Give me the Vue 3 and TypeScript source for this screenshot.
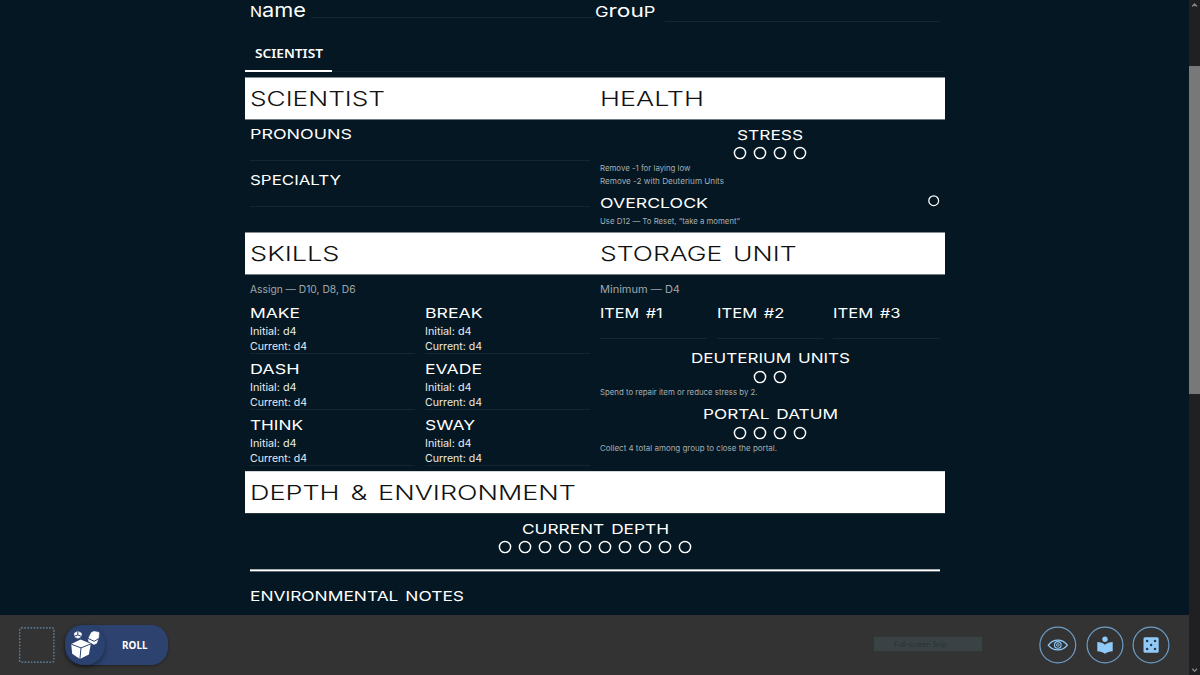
<script setup lang="ts">
import { h } from 'vue'

interface FitProps {
  t: string
  w: number
  h: number
  b: number
  kind: string
}

// A line of text set to an exact width on a given baseline.
const Fit = (p: FitProps) =>
  h('svg', { class: ['fit', p.kind], width: p.w, height: p.h }, [
    h('text', { x: 0, y: p.b, textLength: p.w, lengthAdjust: 'spacingAndGlyphs' }, p.t),
  ])
Fit.props = ['t', 'w', 'h', 'b', 'kind']

// A row of empty tracker circles on a 20px pitch.
const Dots = (p: { n: number }) =>
  h(
    'svg',
    { class: 'pips', width: p.n * 20, height: 14 },
    Array.from({ length: p.n }, (_, i) => h('circle', { cx: i * 20 + 10, cy: 7, r: 5.6 })),
  )
Dots.props = ['n']

const skills = [
  { name: 'MAKE', w: 50 },
  { name: 'BREAK', w: 57.5 },
  { name: 'DASH', w: 49.5 },
  { name: 'EVADE', w: 57 },
  { name: 'THINK', w: 53 },
  { name: 'SWAY', w: 50 },
]
const items = [
  { name: 'ITEM #1', w: 62.5 },
  { name: 'ITEM #2', w: 67.5 },
  { name: 'ITEM #3', w: 67.5 },
]
</script>

<template>
  <div class="app">
    <main class="sheet">
      <header class="ident">
        <div class="who">
          <svg class="fit uni" width="56" height="24"><text x="0" y="16.9" textLength="56" lengthAdjust="spacingAndGlyphs">N<tspan class="lc">ame</tspan></text></svg>
          <i class="rule name-rule"></i>
        </div>
        <div class="who">
          <svg class="fit uni" width="61" height="24"><text x="0" y="16.9" textLength="60.5" lengthAdjust="spacingAndGlyphs">G<tspan class="mc">rou</tspan>P</text></svg>
          <i class="rule group-rule"></i>
        </div>
      </header>
      <nav class="tabs">
        <div class="tab"><Fit t="SCIENTIST" :w="68" :h="38" :b="26.3" kind="tabtext" /></div>
      </nav>

      <div class="bar">
        <Fit t="SCIENTIST" :w="135" :h="41" :b="27.7" kind="big" />
        <Fit t="HEALTH" :w="104" :h="41" :b="27.7" kind="big" />
      </div>
      <section class="cols first">
        <div class="col">
          <div class="field"><Fit t="PRONOUNS" :w="102" :h="40" :b="19.4" kind="head" /></div>
          <div class="field"><Fit t="SPECIALTY" :w="91" :h="45" :b="24.2" kind="head" /></div>
        </div>
        <div class="col">
          <Fit class="mid" t="STRESS" :w="66" :h="26" :b="20" kind="head" />
          <div class="dots"><Dots :n="4" /></div>
          <Fit t="Remove -1 for laying low" :w="90.5" :h="13" :b="11.4" kind="note" />
          <Fit t="Remove -2 with Deuterium Units" :w="124" :h="13" :b="11" kind="note" />
          <div class="clock">
            <Fit t="OVERCLOCK" :w="108" :h="26" :b="21.5" kind="head" />
            <svg class="pips thin" width="12" height="26"><circle cx="5.7" cy="14.7" r="4.9" /></svg>
          </div>
          <Fit t="Use D12 — To Reset, “take a moment”" :w="140" :h="20" :b="11.8" kind="note" />
        </div>
      </section>

      <div class="bar">
        <Fit t="SKILLS" :w="89.5" :h="41" :b="27.9" kind="big" />
        <Fit t="STORAGE UNIT" :w="196.5" :h="41" :b="27.9" kind="big" />
      </div>
      <section class="cols second">
        <div class="col">
          <Fit t="Assign — D10, D8, D6" :w="105.5" :h="23" :b="18.2" kind="body dim" />
          <div class="skills">
            <div v-for="s in skills" :key="s.name" class="skill">
              <Fit :t="s.name" :w="s.w" :h="27" :b="19.8" kind="head" />
              <Fit t="Initial: d4" :w="46.5" :h="15" :b="10" kind="body" />
              <Fit t="Current: d4" :w="57" :h="13" :b="9.8" kind="body" />
            </div>
          </div>
        </div>
        <div class="col">
          <Fit t="Minimum — D4" :w="80" :h="23" :b="18.2" kind="body dim" />
          <div class="items">
            <div v-for="i in items" :key="i.name" class="item">
              <Fit :t="i.name" :w="i.w" :h="40" :b="19.8" kind="head" />
            </div>
          </div>
          <Fit class="mid" t="DEUTERIUM UNITS" :w="159" :h="30" :b="24.4" kind="head" />
          <div class="dots tall"><Dots :n="2" /></div>
          <Fit t="Spend to repair item or reduce stress by 2." :w="157.5" :h="14" :b="10.3" kind="note" />
          <Fit class="mid" t="PORTAL DATUM" :w="135" :h="26" :b="19.8" kind="head" />
          <div class="dots"><Dots :n="4" /></div>
          <Fit t="Collect 4 total among group to close the portal." :w="177" :h="14" :b="11.3" kind="note" />
        </div>
      </section>

      <div class="bar last">
        <Fit t="DEPTH &amp; ENVIRONMENT" :w="326" :h="41" :b="27.6" kind="big" />
      </div>
      <section class="depth">
        <Fit class="mid" t="CURRENT DEPTH" :w="147" :h="26" :b="19.8" kind="head" />
        <div class="dots"><Dots :n="10" /></div>
        <div class="divider"></div>
        <Fit t="ENVIRONMENTAL NOTES" :w="214" :h="40" :b="29.3" kind="head" />
      </section>
    </main>

    <footer class="dock">
      <svg class="slot" width="36" height="36" viewBox="0 0 36 36">
        <rect x=".7" y=".8" width="34.2" height="34.4" rx="1.5" />
      </svg>
      <button class="roll">
        <span class="dice">
          <svg width="40" height="40" viewBox="0 0 40 40">
            <g fill="#fff" stroke="#fff" stroke-width=".6" stroke-linejoin="round">
              <path d="M26.4 7.6 29 6.4 34 7.4 33.6 12.8 31.6 18.2 29 19.4 23.8 16.6 23.2 14Z" />
              <path d="M9.4 8.2 12.8 6.3 16.4 8.2 16.2 11.6 13 13.3 9.6 11.8Z" />
            </g>
            <path d="M6.2 19 15.6 14.6 25.8 18.8 23.9 29.6 14.9 34 7.2 28.8Z" fill="#fff" stroke="#2b4271" stroke-width="1" paint-order="stroke" stroke-linejoin="round" />
            <g fill="none" stroke="#2b4271" stroke-width="1">
              <path d="M6.2 19.2 16 22.9 26 18.8M16 22.9 14.9 34.2M22.4 13.1 29.2 16.3 34.2 13.4M12.8 6 12.8 9.9 9 11.4M12.8 9.9 16.9 11.6" />
            </g>
          </svg>
        </span>
        <Fit t="ROLL" :w="25.5" :h="40" :b="23.8" kind="rolltext" />
      </button>
      <div class="snip"><Fit t="Full-screen Snip" :w="53" :h="14" :b="9.7" kind="sniptext" /></div>
      <div class="tools">
        <span class="tool">
          <svg width="38" height="38" viewBox="0 0 38 38">
            <circle class="ring" cx="18.8" cy="19" r="17.9" />
            <g fill="none" stroke="#90caf9">
              <path stroke-width="1.3" d="M9.3 19.1C14.2 12.5 23.4 12.5 28.3 19.1 23.4 25.5 14.2 25.5 9.3 19.1Z" />
              <circle cx="18.8" cy="18.9" r="3.3" stroke-width="1.1" />
              <circle cx="18.8" cy="18.9" r="1.3" stroke-width="1" />
            </g>
          </svg>
        </span>
        <span class="tool">
          <svg width="38" height="38" viewBox="0 0 38 38">
            <circle class="ring" cx="19" cy="19" r="17.9" />
            <g fill="#90caf9">
              <circle cx="19" cy="13.3" r="2.7" />
              <path d="M11.3 16.1C14.2 16.1 17 17.1 19 18.8 21 17.1 23.8 16.1 26.7 16.1V25.3C23.8 25.4 21 26.2 19 27.8 17 26.2 14.2 25.4 11.3 25.3Z" />
            </g>
          </svg>
        </span>
        <span class="tool">
          <svg width="38" height="38" viewBox="0 0 38 38">
            <circle class="ring" cx="19" cy="19" r="17.9" />
            <rect x="11.5" y="11.2" width="15.2" height="15.6" rx="1.6" fill="#90caf9" />
            <g fill="#2c3a47">
              <circle cx="15.1" cy="15.1" r="1.25" /><circle cx="23" cy="15.1" r="1.25" />
              <circle cx="19.1" cy="19" r="1.25" />
              <circle cx="15.1" cy="22.9" r="1.25" /><circle cx="23" cy="22.9" r="1.25" />
            </g>
          </svg>
        </span>
      </div>
    </footer>

    <aside class="scroll">
      <svg width="11" height="10" viewBox="0 0 11 10"><path d="M3.2 6.5 5.6 4.1 8 6.5" /></svg>
      <div class="thumb"></div>
      <svg width="11" height="10" viewBox="0 0 11 10"><path d="M3.2 3.8 5.6 6.2 8 3.8" /></svg>
    </aside>
  </div>
</template>

<style>
body {
  margin: 0;
  background: #041722;
  overflow: hidden;
}
.fit {
  display: block;
  flex: none;
  overflow: visible;
  fill: #fff;
  font-family: Inter, "Liberation Sans", sans-serif;
}
.fit.mid { margin: 0 auto; }
.fit.big { font-size: 20.6px; font-weight: 300; fill: #111; word-spacing: 2.5px; }
.fit.head { font-size: 13.6px; font-weight: 400; word-spacing: 1.6px; }
.fit.body { font-size: 10.5px; fill: #e9ecee; }
.fit.body.dim { fill: #a0a8ad; }
.fit.note { font-size: 7.9px; fill: #a6aeb3; }
.fit.tabtext { font-family: "Noto Sans", sans-serif; font-size: 12.3px; font-weight: 600; }
.fit.rolltext { font-family: "Noto Sans", sans-serif; font-size: 10.6px; font-weight: 700; }
.fit.sniptext { font-family: Lato, sans-serif; font-size: 7.8px; fill: #293136; }
.fit.uni { font-size: 14px; }
.fit.uni .lc { font-size: 19px; }
.fit.uni .mc { font-size: 17.5px; }
.pips { display: block; fill: none; stroke: #fff; stroke-width: 1.45; }
.pips.thin { stroke-width: 1.25; }
</style>

<style scoped>
.app {
  width: 1200px;
  height: 675px;
  display: grid;
  grid-template-columns: 1189px 11px;
  grid-template-rows: 615px 60px;
  overflow: hidden;
  background: #041722;
}
.sheet {
  width: 700px;
  margin-left: 245px;
}
.ident {
  display: grid;
  grid-template-columns: 345px 345px;
  height: 32px;
  padding-left: 5px;
}
.who { display: flex; align-items: flex-start; }
.rule { height: 1px; background: #14262f; }
.name-rule { width: 284px; margin: 17px 0 0 5px; }
.group-rule { width: 275px; margin: 21px 0 0 9px; }
.tabs {
  height: 40px;
  margin-bottom: 5px;
  box-shadow: inset 0 -1px #10242e;
}
.tab {
  width: 87.4px;
  height: 38px;
  border-bottom: 2px solid #fff;
}
.tab .fit { margin-left: 10px; }
.bar {
  height: 43px;
  box-sizing: border-box;
  background: #fff;
  border-top: 1px solid #858d92;
  border-bottom: 1px solid #737c82;
  display: grid;
  grid-template-columns: 350px 340px;
  padding-left: 5px;
}
.bar.last { border-top-color: #d4d6da; border-bottom-color: #25363f; }
.cols {
  display: grid;
  grid-template-columns: 340px 340px;
  column-gap: 10px;
  padding: 0 5px;
}
.first { height: 112px; }
.second { height: 196px; }
.field { border-bottom: 1px solid #14262f; }
.dots {
  display: flex;
  justify-content: center;
  align-items: center;
  height: 14px;
}
.second .dots { height: 15px; }
.second .dots.tall { height: 16px; }
.clock { display: flex; justify-content: space-between; height: 26px; }
.skills { display: grid; grid-template-columns: 1fr 1fr; column-gap: 10px; }
.skill { height: 55px; border-bottom: 1px solid #14262f; }
.items { display: grid; grid-template-columns: repeat(3, 1fr); column-gap: 10px; }
.item { border-bottom: 1px solid #14262f; }
.depth { padding: 0 5px; }
.divider {
  height: 1px;
  margin-top: 15px;
  background: #fff;
  border-top: 1px solid #a9b0b4;
  border-bottom: 1px solid #5c686f;
}
.dock {
  background: #333;
  display: flex;
  align-items: flex-start;
  padding-left: 19.4px;
}
.slot { margin-top: 12px; flex: none; }
.slot rect { fill: none; stroke: #6291b3; stroke-width: 1.2; stroke-dasharray: 1.6 1.5; }
.roll {
  width: 103px;
  height: 40px;
  margin: 10px 0 0 9.6px;
  padding: 0;
  border: 0;
  border-radius: 17px;
  background: #2d426f;
  display: flex;
  box-shadow: 0 1px 3px rgba(0, 0, 0, 0.35);
}
.dice {
  width: 40px;
  height: 40px;
  margin-right: 17px;
  border-radius: 50%;
  background: #2b4271;
  box-shadow: 0 2px 5px rgba(0, 0, 0, 0.4);
}
.snip {
  width: 108.5px;
  height: 14px;
  margin: 22px 0 0 706px;
  background: #3b4246;
}
.snip .fit { margin-left: 20px; }
.tools { display: flex; gap: 8.2px; margin: 11px 0 0 57px; }
.tool { width: 38px; height: 38px; }
.tool svg { display: block; }
.ring { fill: none; stroke: #6c9dc6; stroke-width: 1.2; }
.scroll {
  grid-column: 2;
  grid-row: 1 / 3;
  background: #202022;
  display: flex;
  flex-direction: column;
}
.scroll path { fill: none; stroke: #858585; stroke-width: 1.4; }
.thumb { height: 328px; margin: 56px 0 271px; background: #787878; flex: none; }
.scroll svg { flex: none; }
</style>
